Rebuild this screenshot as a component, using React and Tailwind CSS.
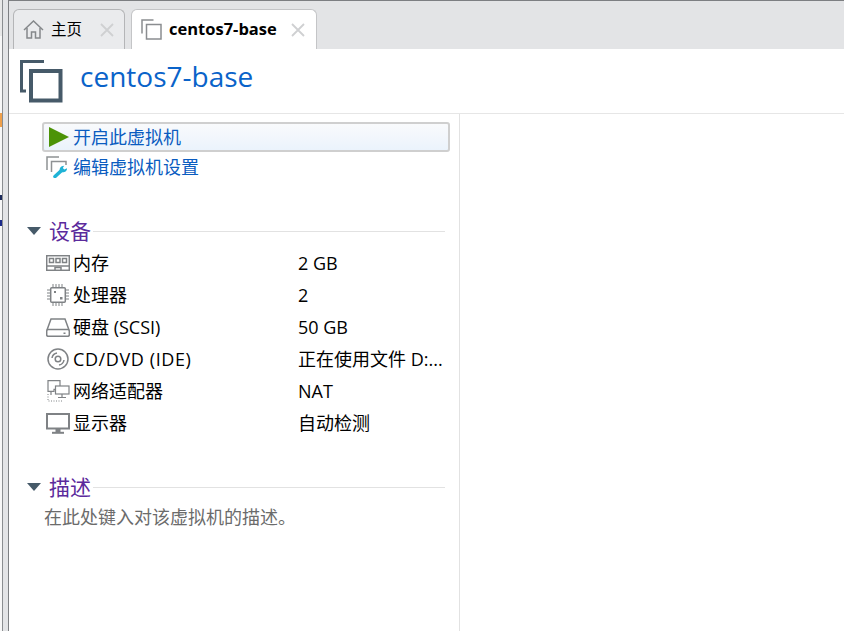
const FONT = "font-['Open_Sans','Noto_Sans_CJK_SC',sans-serif]";

function TabVmIcon() {
  return (
    <svg width="21" height="21" viewBox="0 0 21 21" fill="none" stroke="#8a8d90" className="shrink-0">
      <path d="M12.5 1H1v13.5" strokeWidth="1.5" />
      <rect x="5.5" y="5.5" width="14.5" height="14.5" strokeWidth="1.5" />
    </svg>
  );
}

function HomeIcon() {
  return (
    <svg width="21" height="19" viewBox="0 0 21 19" fill="none" stroke="#85888b" strokeWidth="1.5" className="shrink-0">
      <path d="M1 10 10.5 1 20 10" />
      <path d="M4 8v10h4.5v-6h4v6H17V8" />
    </svg>
  );
}

function CloseX() {
  return (
    <svg width="14" height="14" viewBox="0 0 14 14" stroke="#cfd0d2" strokeWidth="1.8" className="shrink-0">
      <path d="M1 1l12 12M13 1 1 13" />
    </svg>
  );
}

function TitleIcon() {
  return (
    <svg width="43" height="43" viewBox="0 0 43 43" fill="none" stroke="#465a69" className="shrink-0">
      <path d="M24 1.5H1.5V31H6" strokeWidth="3" />
      <rect x="11" y="11" width="29.500" height="29.500" strokeWidth="4" />
    </svg>
  );
}

function Play() {
  return (
    <svg width="20" height="20" viewBox="0 0 20 20" className="shrink-0">
      <path d="M0 0 20 10 0 20Z" fill="#4c9307" />
    </svg>
  );
}

function EditIcon() {
  return (
    <svg width="22" height="22" viewBox="0 0 22 22" fill="none" className="shrink-0">
      <path d="M13 1H1v13" stroke="#8f9294" strokeWidth="1.5" />
      <path d="M5.5 16V5.5H20V9" stroke="#8f9294" strokeWidth="1.5" />
      <path d="M9 20.500l6.500-6" stroke="#1fb3d6" strokeWidth="3.600" strokeLinecap="round" />
      <path d="M14 15c-1-2.600.6-5 4.200-5.200l-1.400 2.200 1.500 1.400 2.700-1.200c.4 3-3.200 5-6 3.800Z" fill="#1fb3d6" />
    </svg>
  );
}

const S = { stroke: "#7f8285", fill: "none", strokeWidth: 1.5 };

function MemIcon() {
  return (
    <svg width="24" height="16" viewBox="0 0 24 16" {...S} className="shrink-0">
      <rect x=".7" y=".7" width="22.6" height="14.600" />
      <path d="M.7 11h22.600" />
      <path d="M3.500 3.500h4v4h-4zM10 3.500h4v4h-4zM16.500 3.500h4v4h-4z" />
      <path d="M9 15v-2.500h6V15" />
    </svg>
  );
}

function CpuIcon() {
  return (
    <svg width="22" height="22" viewBox="0 0 22 22" {...S} className="shrink-0">
      <rect x="3.700" y="3.700" width="14.600" height="14.600" rx="1" />
      <path d="M6 0v3M9 0v3M12 0v3M15 0v3M6 19v3M9 19v3M12 19v3M15 19v3M0 6h3M0 9h3M0 12h3M0 15h3M19 6h3M19 9h3M19 12h3M19 15h3" strokeWidth="1" />
      <rect x="7" y="7" width="2" height="2" fill="#7f8285" stroke="none" />
      <rect x="13" y="13" width="2.500" height="2.500" fill="#7f8285" stroke="none" />
    </svg>
  );
}

function DiskIcon() {
  return (
    <svg width="24" height="19" viewBox="0 0 24 19" {...S} className="shrink-0">
      <path d="M1 12 5 1h14l4 11" />
      <rect x=".7" y="11.500" width="22.600" height="6.800" rx="1.500" />
      <rect x="17.500" y="14.500" width="2" height="1.500" fill="#7f8285" stroke="none" />
    </svg>
  );
}

function CdIcon() {
  return (
    <svg width="22" height="22" viewBox="0 0 22 22" {...S} className="shrink-0">
      <circle cx="11" cy="11" r="10" />
      <circle cx="11" cy="11" r="2.800" />
      <path d="M5 10a6 6 0 0 1 5-5M17 12a6 6 0 0 1-5 5" />
    </svg>
  );
}

function NetIcon() {
  return (
    <svg width="23" height="22" viewBox="0 0 23 22" {...S} className="shrink-0">
      <path d="M1 .7h12v8.600H7v2H1z" strokeWidth="1.200" />
      <rect x="8.500" y="6" width="13.500" height="8" fill="#fff" strokeWidth="1.200" />
      <path d="M15 14v3M11 17.500h8M4 12v3" strokeWidth="1.200" />
      <path d="M1 14v7h14" strokeWidth="1" strokeDasharray="1 1.500" />
    </svg>
  );
}

function MonitorIcon() {
  return (
    <svg width="24" height="21" viewBox="0 0 24 21" {...S} className="shrink-0">
      <rect x="1" y="1" width="22" height="14.500" strokeWidth="2" />
      <path d="M12 16v3" strokeWidth="5" />
      <path d="M6 19.800h12" strokeWidth="2" />
    </svg>
  );
}

function SectionHead({ title }) {
  return (
    <div className="flex items-center h-7 pl-[18px] pr-[14px]">
      <svg width="14" height="8" viewBox="0 0 14 8" className="shrink-0">
        <path d="M0 0h14L7 8Z" fill="#465a69" />
      </svg>
      <span className="ml-2 text-[21px] leading-7 text-[#5b2a9c]">{title}</span>
      <div className="flex-1 h-px bg-[#e2e2e2] ml-0.5" />
    </div>
  );
}

const rows = [
  [MemIcon, "内存", "2 GB", ""],
  [CpuIcon, "处理器", "2", ""],
  [DiskIcon, "硬盘 (SCSI)", "50 GB", ""],
  [CdIcon, "CD/DVD (IDE)", "正在使用文件 D:...", "tracking-[0.6px]"],
  [NetIcon, "网络适配器", "NAT", ""],
  [MonitorIcon, "显示器", "自动检测", ""],
];

export default function App() {
  return (
    <div className={`${FONT} w-[844px] h-[631px] overflow-hidden flex bg-white text-black`}>
      <div className="w-[9px] shrink-0 flex border-r border-[#7d7f82]">
        <div className="w-0.5 flex flex-col">
          <div className="h-9 bg-[#e8e8e8]" />
          <div className="h-[77px] bg-[#f7f7f7]" />
          <div className="h-[14px] bg-[#f0a04a]" />
          <div className="h-[68px] bg-[#f7f7f7]" />
          <div className="h-[5px] bg-[#1c2a5a]" />
          <div className="h-5 bg-[#f7f7f7]" />
          <div className="h-[6px] bg-[#1c2a8a]" />
          <div className="flex-1 bg-[#f7f7f7]" />
        </div>
        <div className="w-px bg-[#8a8d90]" />
        <div className="flex-1 bg-[#e3e4e6]" />
      </div>
      <div className="flex-1 flex flex-col min-w-0">
        <div className="h-[49px] shrink-0 bg-[#e3e4e6] border-t border-[#7d7f82] flex items-end pl-1 gap-[6px]">
          <div className="w-[112px] h-10 rounded-t-md border border-b-0 border-[#b4b5b7] bg-[#eaebed] flex items-center pl-[9px] pr-[10px]">
            <HomeIcon />
            <span className="ml-[7px] text-[15.500px] flex-1">主页</span>
            <CloseX />
          </div>
          <div className="w-[186px] h-10 rounded-t-md border border-b-0 border-[#c4c5c7] bg-white flex items-center pl-[9px] pr-[11px]">
            <TabVmIcon />
            <span className="ml-[7px] text-[16.500px] font-bold flex-1">centos7-base</span>
            <CloseX />
          </div>
        </div>
        <div className="h-[65px] shrink-0 flex items-center pl-[11px] border-b border-[#e6e6e6]">
          <TitleIcon />
          <h1 className="ml-[17px] text-[28px] text-[#0a63c9] font-normal relative -top-[5px]">centos7-base</h1>
        </div>
        <div className="flex-1 flex min-h-0">
          <div className="w-[451px] shrink-0 border-r border-[#e2e2e2] flex flex-col pt-[8px]">
            <div className="ml-[33px] mr-[9px] h-[30px] rounded-[3px] border-2 border-[#cfcfcf] bg-gradient-to-b from-[#f9fafc] to-[#ebf3fc] flex items-center pl-[5px] text-[18px] text-[#0a5cc0]">
              <Play />
              <span className="ml-1">开启此虚拟机</span>
            </div>
            <div className="ml-[37px] mt-px h-[28px] flex items-center text-[18px] text-[#0a5cc0]">
              <EditIcon />
              <span className="ml-[5px]">编辑虚拟机设置</span>
            </div>
            <div className="mt-9">
              <SectionHead title="设备" />
            </div>
            <div className="mt-0.5 flex flex-col">
              {rows.map(([Icon, name, value, extra]) => (
                <div key={name} className="h-8 flex items-center text-[18px]">
                  <div className="ml-[37px] w-6 flex justify-center shrink-0"><Icon /></div>
                  <span className={`ml-[3px] w-[225px] ${extra}`}>{name}</span>
                  <span>{value}</span>
                </div>
              ))}
            </div>
            <div className="mt-[34px]">
              <SectionHead title="描述" />
            </div>
            <p className="ml-[35px] mt-0.5 text-[18px] leading-7 text-[#6b6b6b]">在此处键入对该虚拟机的描述。</p>
          </div>
        </div>
      </div>
    </div>
  );
}
